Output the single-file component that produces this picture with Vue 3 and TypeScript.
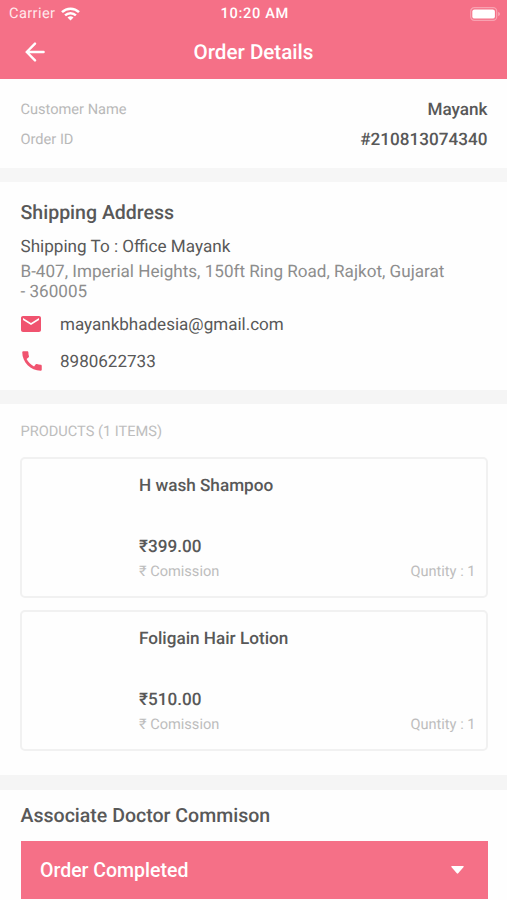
<script setup lang="ts">
interface Product {
  name: string
  price: string
  quantity: number
}

const address = {
  recipient: 'Office Mayank',
  lines: 'B-407, Imperial Heights, 150ft Ring Road, Rajkot, Gujarat - 360005',
  email: 'mayankbhadesia@gmail.com',
  phone: '8980622733',
}

const products: Product[] = [
  { name: 'H wash Shampoo', price: '399.00', quantity: 1 },
  { name: 'Foligain Hair Lotion', price: '510.00', quantity: 1 },
]
</script>

<template>
  <div class="screen">
    <header class="header">
      <div class="status">
        <div class="carrier">
          <span>Carrier</span>
          <svg width="19" height="14" viewBox="0 0 19 14" fill="none" stroke="#fff" stroke-width="2.5">
            <path d="M1 5.1a12.2 12.2 0 0 1 17 0" />
            <path d="M4.1 8.4a7.8 7.8 0 0 1 10.8 0" />
            <path d="M9.5 13.6 6.5 10.6a4.4 4.4 0 0 1 6 0z" fill="#fff" stroke="none" />
          </svg>
        </div>
        <span class="clock">10:20 AM</span>
        <svg class="battery" width="31" height="14" viewBox="0 0 31 14">
          <rect x="0.7" y="0.7" width="26" height="12.6" rx="3.6" fill="none" stroke="#fff" stroke-opacity=".35" stroke-width="1.2" />
          <rect x="2.3" y="2.4" width="22.6" height="9.2" rx="2.2" fill="#fff" />
          <path d="M28.2 5v4c1.1-.4 1.7-1.1 1.7-2s-.6-1.6-1.7-2z" fill="#fff" fill-opacity=".4" />
        </svg>
      </div>
      <div class="nav">
        <button class="back" type="button">
          <svg width="20" height="20" viewBox="0 0 20 20" fill="none" stroke="#fff" stroke-width="2.4" stroke-linecap="round" stroke-linejoin="round">
            <path d="M18.6 10H1.7M10 1.6 1.7 10l8.3 8.4" />
          </svg>
        </button>
        <h1>Order Details</h1>
      </div>
    </header>

    <section class="summary">
      <div class="row">
        <span class="label">Customer Name</span>
        <span class="value">Mayank</span>
      </div>
      <div class="row">
        <span class="label">Order ID</span>
        <span class="value">#210813074340</span>
      </div>
    </section>

    <section class="shipping">
      <h2>Shipping Address</h2>
      <p class="recipient">Shipping To : {{ address.recipient }}</p>
      <p class="lines">{{ address.lines }}</p>
      <div class="contact email">
        <svg width="24" height="24" viewBox="0 0 24 24" fill="#f0536f">
          <path d="M20 4H4c-1.1 0-1.99.9-1.99 2L2 18c0 1.1.9 2 2 2h16c1.1 0 2-.9 2-2V6c0-1.1-.9-2-2-2zm0 4-8 5-8-5V6l8 5 8-5v2z" />
        </svg>
        <span>{{ address.email }}</span>
      </div>
      <div class="contact phone">
        <svg width="26" height="26" viewBox="0 0 24 24" fill="#f0536f">
          <path d="M20.01 15.38c-1.23 0-2.42-.2-3.53-.56a.977.977 0 0 0-1.01.24l-1.57 1.97c-2.83-1.35-5.48-3.9-6.89-6.83l1.95-1.66c.27-.28.35-.67.24-1.02-.37-1.11-.56-2.3-.56-3.53 0-.54-.45-.99-.99-.99H4.19C3.65 3 3 3.24 3 3.99 3 13.28 10.73 21 20.01 21c.71 0 .99-.63.99-1.18v-3.45c0-.54-.45-.99-.99-.99z" />
        </svg>
        <span>{{ address.phone }}</span>
      </div>
    </section>

    <section class="products">
      <h3>PRODUCTS (1 ITEMS)</h3>
      <article v-for="product in products" :key="product.name" class="card">
        <h4>{{ product.name }}</h4>
        <p class="price">₹{{ product.price }}</p>
        <div class="meta">
          <span>₹ Comission</span>
          <span>Quntity : {{ product.quantity }}</span>
        </div>
      </article>
    </section>

    <section class="commission">
      <h2>Associate Doctor Commison</h2>
      <button class="select" type="button">
        <span>Order Completed</span>
        <svg width="13" height="8" viewBox="0 0 13 8" fill="#fff">
          <path d="M.9 0h11.2q1.1 0 .5.9L7.2 7.3q-.7.7-1.4 0L.4.9Q-.2 0 .9 0z" />
        </svg>
      </button>
    </section>
  </div>
</template>

<style>
body {
  margin: 0;
  background: #fff;
}
</style>

<style scoped>
.screen {
  box-sizing: border-box;
  height: 900px;
  overflow: hidden;
  background: #fefefe;
  color: #585858;
  font-family: Roboto, "Noto Sans", sans-serif;
  text-rendering: geometricPrecision;
}

h1, h2, h3, h4, p {
  margin: 0;
  font-weight: 500;
}

button {
  padding: 0;
  border: 0;
  background: none;
  font: inherit;
  color: inherit;
}

svg {
  display: block;
  flex: none;
}

section {
  box-sizing: border-box;
  padding: 0 19.5px 0 20.5px;
}

.header {
  box-sizing: border-box;
  height: 79px;
  background: #f57087;
  color: #fff;
}

.status {
  display: grid;
  grid-template-columns: 1fr auto 1fr;
  align-items: center;
  height: 27px;
  padding: 0 6.5px 0 9px;
}

.carrier {
  display: flex;
  align-items: center;
  gap: 6px;
  font-size: 14.6px;
  line-height: 27px;
  letter-spacing: 0.4px;
  color: #ffe9ec;
}

.clock {
  font-size: 14.6px;
  font-weight: 500;
  letter-spacing: 0.7px;
  line-height: 27px;
}

.battery {
  justify-self: end;
}

.nav {
  display: grid;
  grid-template-columns: 45px 1fr 45px;
  align-items: center;
  height: 50px;
}

.back {
  padding-left: 25px;
}

.nav h1 {
  padding-top: 2px;
  text-align: center;
  font-size: 20.6px;
  line-height: 48px;
}

.summary {
  height: 103px;
  padding-top: 15px;
  border-bottom: 14px solid #f6f6f6;
}

.row {
  display: flex;
  justify-content: space-between;
  height: 30px;
}

.label {
  font-size: 14.6px;
  line-height: 31px;
  color: #b9b9b9;
}

.value {
  font-size: 17.15px;
  font-weight: 500;
  line-height: 32px;
}

.shipping {
  height: 222px;
  padding-top: 19px;
  border-bottom: 14px solid #f5f5f5;
}

h2 {
  font-size: 19.55px;
  line-height: 24px;
}

.recipient {
  margin-top: 11px;
  font-size: 17.1px;
  font-weight: 400;
  line-height: 22px;
}

.lines {
  width: 428px;
  margin-top: 4px;
  font-size: 17.1px;
  font-weight: 400;
  line-height: 20px;
  color: #8d8d8d;
}

.contact {
  display: flex;
  align-items: center;
  font-size: 17.05px;
  line-height: 24px;
}

.contact svg {
  margin-left: -1.5px;
}

.contact span {
  padding-top: 2px;
}

.email {
  margin-top: 9px;
  gap: 17px;
}

.phone {
  margin-top: 11px;
  gap: 15px;
}

.products {
  height: 386px;
  padding-top: 17px;
  border-bottom: 15px solid #f5f5f5;
}

h3 {
  height: 20px;
  margin-bottom: 16px;
  font-size: 14.6px;
  font-weight: 400;
  line-height: 21px;
  color: #bdbdbd;
}

.card {
  box-sizing: border-box;
  height: 141px;
  margin: 0 0 12px -0.5px;
  padding: 16px 10px 0 117px;
  border: 2px solid #f1f1f1;
  border-radius: 5px;
}

.card h4,
.price {
  font-size: 17.15px;
  line-height: 22px;
}

.price {
  margin-top: 39px;
}

.meta {
  display: flex;
  justify-content: space-between;
  margin-top: 3px;
  font-size: 14.6px;
  line-height: 20px;
  color: #bdbdbd;
}

.commission {
  padding-top: 14px;
}

.select {
  box-sizing: border-box;
  display: flex;
  align-items: center;
  justify-content: space-between;
  width: 467px;
  height: 58px;
  margin-top: 13px;
  padding: 0 24px 0 19.5px;
  background: #f57087;
  color: #fff;
  font-size: 19.5px;
  font-weight: 500;
}
</style>
